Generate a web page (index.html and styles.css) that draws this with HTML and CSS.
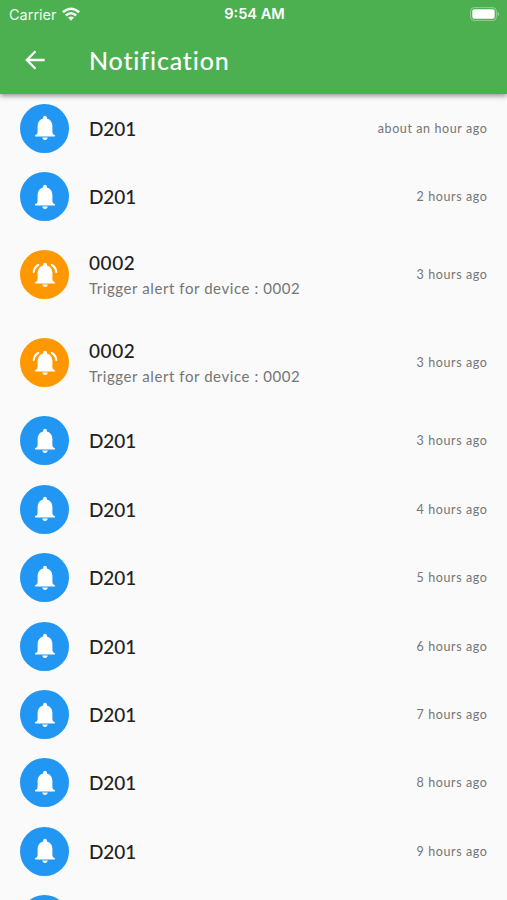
FILE: index.html
```
<!DOCTYPE html>
<html lang="en">
<head>
<meta charset="utf-8">
<title>Notification</title>
<link rel="stylesheet" href="styles.css">
</head>
<body>
<svg class="defs" aria-hidden="true">
  <symbol id="bell" viewBox="0 0 30 30">
    <path d="M15 2.800c1.100 0 1.900.8 1.900 1.900v.7c3.700 1 5.500 4 5.500 7.400v6c0 1.800.7 2.900 2.100 3.200.4.100.6.400.6.800s-.3.800-.7.800H5.600c-.4 0-.7-.4-.7-.8s.2-.7.6-.8c1.400-.3 2.100-1.400 2.100-3.200v-6c0-3.400 1.800-6.400 5.500-7.400v-.7c0-1.100.8-1.900 1.900-1.900zM12.300 24.500h5.400c-.2 1.500-1.200 2.500-2.700 2.500s-2.500-1-2.700-2.500z"/>
  </symbol>
  <symbol id="bell-ring" viewBox="0 0 30 30">
    <use href="#bell"/>
    <path class="stroke" d="M8.200 4.900Q4.200 7.400 3.700 12M21.800 4.900Q25.800 7.400 26.300 12"/>
  </symbol>
</svg>
<header class="top">
  <div class="status">
    <div class="carrier">Carrier
      <svg class="wifi" viewBox="0 0 18 14"><path d="M0 4.300Q9-3.500 18 4.300L16.300 6.200Q9-.2 1.700 6.200zM3 7.500Q9 2.300 15 7.500L13.300 9.400Q9 5.700 4.700 9.400zM6 10.600Q9 8.200 12 10.600L9 13.800z"/></svg>
    </div>
    <div class="clock">9:54 AM</div>
    <svg class="battery" viewBox="0 0 30 14"><rect class="case" x=".6" y=".6" width="25.800" height="12.800" rx="3.500"/><rect x="2.300" y="2.300" width="22.400" height="9.400" rx="2"/><path class="tip" d="M27.700 4.700q3 2.300 0 4.600z"/></svg>
  </div>
  <div class="bar">
    <svg class="back" viewBox="0 0 20 20"><path d="M19.200 10H1.800M10 1.300L1.300 10l8.700 8.700"/></svg>
    <h1>Notification</h1>
  </div>
</header>
<main>
  <div class="row"><span class="avatar"><svg><use href="#bell"/></svg></span><div class="text"><b>D201</b></div><time>about an hour ago</time></div>
  <div class="row"><span class="avatar"><svg><use href="#bell"/></svg></span><div class="text"><b>D201</b></div><time>2 hours ago</time></div>
  <div class="row alert"><span class="avatar"><svg><use href="#bell-ring"/></svg></span><div class="text"><b>0002</b><p>Trigger alert for device : 0002</p></div><time>3 hours ago</time></div>
  <div class="row alert"><span class="avatar"><svg><use href="#bell-ring"/></svg></span><div class="text"><b>0002</b><p>Trigger alert for device : 0002</p></div><time>3 hours ago</time></div>
  <div class="row"><span class="avatar"><svg><use href="#bell"/></svg></span><div class="text"><b>D201</b></div><time>3 hours ago</time></div>
  <div class="row"><span class="avatar"><svg><use href="#bell"/></svg></span><div class="text"><b>D201</b></div><time>4 hours ago</time></div>
  <div class="row"><span class="avatar"><svg><use href="#bell"/></svg></span><div class="text"><b>D201</b></div><time>5 hours ago</time></div>
  <div class="row"><span class="avatar"><svg><use href="#bell"/></svg></span><div class="text"><b>D201</b></div><time>6 hours ago</time></div>
  <div class="row"><span class="avatar"><svg><use href="#bell"/></svg></span><div class="text"><b>D201</b></div><time>7 hours ago</time></div>
  <div class="row"><span class="avatar"><svg><use href="#bell"/></svg></span><div class="text"><b>D201</b></div><time>8 hours ago</time></div>
  <div class="row"><span class="avatar"><svg><use href="#bell"/></svg></span><div class="text"><b>D201</b></div><time>9 hours ago</time></div>
  <div class="row"><span class="avatar"></span></div>
</main>
</body>
</html>
```
FILE: styles.css
```
* { box-sizing: border-box; margin: 0; }
body {
  height: 900px;
  overflow: hidden;
  display: flex;
  flex-direction: column;
  background: #fafafa;
  color: #212121;
  font-family: Lato, "Open Sans", sans-serif;
}
svg { display: block; fill: currentColor; }
.defs { position: absolute; width: 0; height: 0; }
.top {
  flex: none;
  position: relative;
  height: 94px;
  background: #4caf50;
  color: #fff;
  box-shadow: 0 2px 5px rgba(0, 0, 0, .42);
}
.status {
  height: 27px;
  padding: 0 7px 0 9px;
  display: grid;
  grid-template-columns: 1fr auto 1fr;
  align-items: center;
  font: 14.5px/27px Inter, sans-serif;
}
.carrier { display: flex; align-items: center; gap: 5px; opacity: .93; }
.wifi { width: 18px; height: 14px; }
.clock { padding-top: 1px; font-size: 14.6px; font-weight: 600; }
.battery { justify-self: end; width: 30px; height: 14px; }
.case { fill: none; stroke: #fff; opacity: .4; }
.tip { opacity: .45; }
.bar { height: 66px; display: flex; align-items: center; padding-left: 25px; }
.back { width: 21px; height: 20px; margin-right: 43px; fill: none; stroke: #fff; stroke-width: 2.3; }
h1 { font-size: 25px; font-weight: 500; line-height: 30px; letter-spacing: .85px; }
main { flex: 1; min-height: 0; overflow: hidden; }
.row { height: 68.4px; display: flex; align-items: center; padding: 0 19.5px 0 20.4px; }
.alert { height: 88px; }
.avatar {
  flex: none;
  width: 49px;
  height: 49px;
  border-radius: 50%;
  background: #2196f3;
  color: #fff;
  display: grid;
  place-items: center;
}
.alert .avatar { background: #ff9800; }
.avatar svg { width: 30px; height: 30px; }
.stroke { fill: none; stroke: currentColor; stroke-width: 2.2; stroke-linecap: round; }
.text { flex: 1; margin-left: 19.6px; }
b { display: block; padding-top: 1px; font-size: 19px; font-weight: 500; line-height: 26px; letter-spacing: -.1px; }
.alert b { letter-spacing: .6px; }
p { font-size: 15px; line-height: 25px; letter-spacing: .58px; color: #757575; }
time { font-size: 12.5px; letter-spacing: .6px; color: #757575; }
```
